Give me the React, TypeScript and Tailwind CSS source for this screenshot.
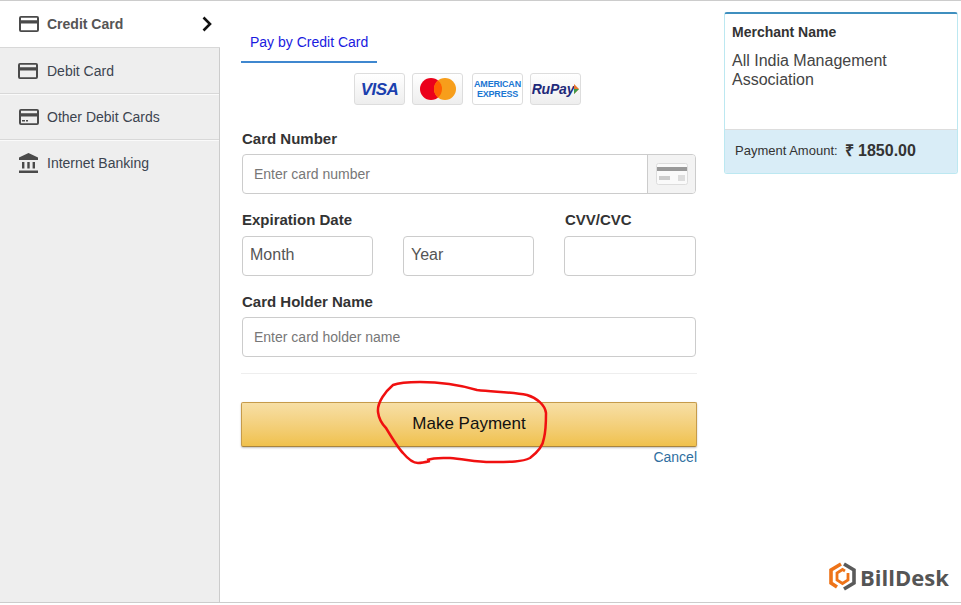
import { ReactNode } from 'react'

const font = { fontFamily: '"Liberation Sans", Arial, sans-serif' }

function CardIcon({ stripe = false, className = '' }: { stripe?: boolean; className?: string }) {
  return (
    <svg width="20" height="16" viewBox="0 0 20 16" className={'shrink-0 ' + className}>
      <path
        fillRule="evenodd"
        fill="#4a4a4a"
        d="M2 0h16a2 2 0 0 1 2 2v12a2 2 0 0 1-2 2H2a2 2 0 0 1-2-2V2a2 2 0 0 1 2-2zM2 1.800v2.400h16V1.800zM2 7.400v6.800h16V7.400z"
      />
      {stripe && <path fill="#4a4a4a" d="M3 11h3v1.500H3zM7 11h2v1.500H7z" />}
    </svg>
  )
}

function BankIcon({ className = '' }: { className?: string }) {
  return (
    <svg width="19" height="21" viewBox="0 0 19 21" className={'shrink-0 ' + className}>
      <path fill="#4a4a4a" d="M9.500 0l9.500 4.500V7H0V4.500zM3 9h2.400v6.500H3zM8.300 9h2.400v6.500H8.300zM13.600 9H16v6.500h-2.400zM0 17.600h19V20H0z" />
    </svg>
  )
}

function SideItem({ icon, label, last }: { icon: ReactNode; label: string; last?: boolean }) {
  return (
    <div className={last ? 'h-[46px] flex items-center pl-[18px]' : 'h-[46px] flex items-center pl-[18px] border-b border-[#d8d8d8] shadow-[0_1px_0_#fafafa]'}>
      <div className="w-[29px] flex items-center">{icon}</div>
      <span className="text-sm text-[#3c4450]">{label}</span>
    </div>
  )
}

function Logo({ children, plain, className = '' }: { children: ReactNode; plain?: boolean; className?: string }) {
  return (
    <div
      className={
        (plain ? 'bg-white ' : 'bg-gradient-to-b from-white to-[#eee] ') +
        'w-[51px] h-[32px] rounded-[3px] border border-[#ddd] flex items-center justify-center overflow-hidden ' +
        className
      }
    >
      {children}
    </div>
  )
}

function Label({ children }: { children: ReactNode }) {
  return <label className="block text-[15px] leading-[20px] font-bold text-[#333]">{children}</label>
}

export default function App() {
  return (
    <div style={font} className="relative h-[605px] w-[961px] overflow-hidden bg-white">
      <div className="h-[603px] flex border-t border-b border-[#ccc]">
        <aside className="w-[220px] shrink-0 bg-[#eee] border-r border-[#ccc]">
          <div className="h-[47px] w-[220px] flex items-center pl-[19px] pr-[6px] bg-white border-b border-[#d8d8d8]">
            <CardIcon />
            <span className="ml-2 text-sm font-bold text-[#555]">Credit Card</span>
            <svg width="12" height="16" viewBox="0 0 12 16" className="ml-auto mr-[1px]">
              <path d="M2.500 1.500L9 8l-6.500 6.500" fill="none" stroke="#111" strokeWidth="2.600" />
            </svg>
          </div>
          <SideItem icon={<CardIcon />} label="Debit Card" />
          <SideItem icon={<CardIcon stripe className="ml-[1px]" />} label="Other Debit Cards" />
          <SideItem last icon={<BankIcon className="ml-[1px]" />} label="Internet Banking" />
        </aside>

        <main className="w-[456px] ml-[21px] shrink-0">
          <div className="w-[136px] h-[62px] pt-[31px] pl-[9px] border-b-2 border-[#3f87cf] text-sm text-[#1a1ae0] whitespace-nowrap">
            Pay by Credit Card
          </div>

          <div className="mt-[10px] ml-[113px] flex gap-[7px] h-[32px]">
            <Logo>
              <span className="text-[17px] leading-none font-bold italic tracking-[-0.5px] text-[#1a3fae]">VISA</span>
            </Logo>
            <Logo>
              <svg width="36" height="22" viewBox="0 0 36 22">
                <circle cx="11" cy="11" r="11" fill="#eb001b" />
                <circle cx="25" cy="11" r="11" fill="#f79e1b" />
                <path d="M18 2.500a11 11 0 0 1 0 17a11 11 0 0 1 0-17z" fill="#ff5f00" />
              </svg>
            </Logo>
            <Logo plain className="ml-[2px]">
              <div className="text-center text-[9px] leading-[10px] font-bold text-[#1a76d2] tracking-[-0.2px]">
                AMERICAN
                <br />
                EXPRESS
              </div>
            </Logo>
            <Logo>
              <span className="text-[14px] leading-none font-bold italic text-[#1f2a7a] tracking-[-0.2px]">RuPay</span>
              <svg width="5" height="10" viewBox="0 0 5 10" className="shrink-0">
                <path d="M0 0l5 5-5 5z" fill="#e8772e" />
                <path d="M0 5h5l-5 5z" fill="#3f9a4a" />
              </svg>
            </Logo>
          </div>

          <div className="mt-[24px] mx-[1px]">
            <Label>Card Number</Label>
            <div className="mt-[5px] h-[40px] flex rounded-[4px] border border-[#ccc] overflow-hidden">
              <div className="flex-1 flex items-center pl-[11px] text-sm text-[#777]">Enter card number</div>
              <div className="w-[48px] bg-[#f3f3f3] border-l border-[#ccc] flex items-center justify-center">
                <svg width="32" height="22" viewBox="0 0 32 22">
                  <rect x="0.500" y="0.500" width="31" height="21" rx="2" fill="#fafafa" stroke="#ddd" />
                  <rect x="1" y="4" width="30" height="4" fill="#999" />
                  <rect x="3" y="13" width="11" height="4" fill="#ccc" />
                  <rect x="22" y="12" width="7" height="6" fill="#ddd" />
                </svg>
              </div>
            </div>
          </div>

          <div className="mt-[16px] mx-[1px] flex">
            <div className="w-[322px]">
              <Label>Expiration Date</Label>
              <div className="mt-[6px] flex gap-[30px]">
                <div className="w-[131px] h-[40px] rounded-[4px] border border-[#ccc] flex items-center pl-[7px] pb-[3px] text-base text-[#555]">Month</div>
                <div className="w-[131px] h-[40px] rounded-[4px] border border-[#ccc] flex items-center pl-[7px] pb-[3px] text-base text-[#555]">Year</div>
              </div>
            </div>
            <div className="flex-1">
              <div className="pl-[1px]">
                <Label>CVV/CVC</Label>
              </div>
              <div className="mt-[6px] h-[40px] rounded-[4px] border border-[#ccc]" />
            </div>
          </div>

          <div className="mt-[16px] mx-[1px]">
            <Label>Card Holder Name</Label>
            <div className="mt-[5px] h-[40px] rounded-[4px] border border-[#ccc] flex items-center pl-[11px] text-sm text-[#777]">
              Enter card holder name
            </div>
          </div>

          <div className="mt-[16px] border-t border-[#eee]" />

          <div className="mt-[28px] h-[45px] pb-[2px] rounded-[2px] border border-[#c69b4a] border-b-[#a8843f] bg-gradient-to-b from-[#f7dfa5] to-[#f0c14b] shadow-[0_1px_2px_rgba(0,0,0,0.25)] flex items-center justify-center text-[17px] text-[#111]">
            Make Payment
          </div>
          <div className="text-right text-sm text-[#2f6f9f]">Cancel</div>
        </main>

        <aside className="ml-[27px] mt-[11px] w-[234px] h-[162px] shrink-0 flex flex-col rounded-[3px] border border-[#bce8f1] border-t-2 border-t-[#3f8fbf] overflow-hidden">
          <div className="flex-1 px-[7px] pt-[8px] bg-white">
            <div className="text-sm font-bold text-[#333]">Merchant Name</div>
            <div className="mt-[9px] text-base leading-[19px] text-[#444]">All India Management Association</div>
          </div>
          <div className="h-[44px] flex items-center pl-[10px] pb-[1px] bg-[#d9edf7] border-t border-[#ddd]">
            <span className="text-[13px] text-[#333]">Payment Amount:</span>
            <span className="ml-[7px] text-base font-bold text-[#333]">₹ 1850.00</span>
          </div>
        </aside>
      </div>

      {/* BillDesk logo */}
      <div className="absolute left-[829px] top-[562px] flex items-center">
        <svg width="27" height="29" viewBox="0 0 27 29">
          <path d="M12 2L2 8v13l6 4" fill="none" stroke="#ee7318" strokeWidth="3.600" />
          <path d="M15 2l10 6v13l-10 6" fill="none" stroke="#5a5a5a" strokeWidth="3.600" />
          <path d="M16 9l-2.500-1.500L8 11v7l5.500 3.500L19 18v-7" fill="none" stroke="#ee7318" strokeWidth="2.800" />
        </svg>
        <span className="ml-[4px] text-[22px] leading-none font-bold text-[#555]" style={{ fontFamily: '"Open Sans", sans-serif' }}>
          BillDesk
        </span>
      </div>

      {/* red pen circle drawn over the button */}
      <svg className="absolute left-0 top-0 pointer-events-none" width="961" height="605" viewBox="0 0 961 605">
        <path
          d="M427 460 C435 457 445 458 450 458 C465 459 480 463 495 462 C510 462 522 462 530 458 C538 452 543 446 544 438 C546 430 546 420 546 413 C545 405 537 398 527 395 C512 392 495 392 477 390 C460 385 440 382 420 382 C408 382 398 383 393 385 C386 391 377 402 378 412 C379 420 382 424 386 428 C392 438 398 448 403 453 C408 459 413 463 418 463 C422 463 426 462 430 461"
          fill="none"
          stroke="#f01010"
          strokeWidth="2.500"
        />
      </svg>
    </div>
  )
}
